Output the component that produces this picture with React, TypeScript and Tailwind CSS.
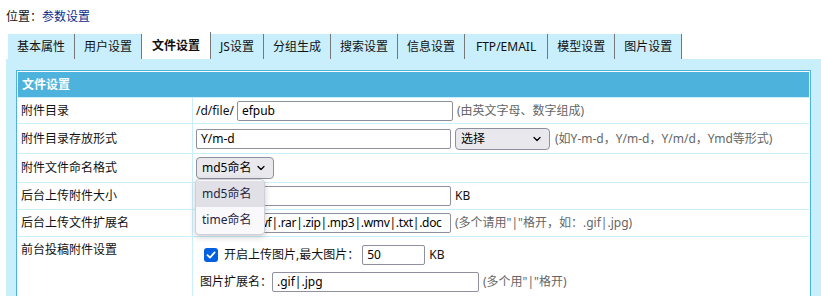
import React from 'react';
import { ChevronDown } from 'lucide-react';

const tabs = ['基本属性', '用户设置', '文件设置', 'JS设置', '分组生成', '搜索设置', '信息设置', 'FTP/EMAIL', '模型设置', '图片设置'];

const TextBox = ({ value, className }: { value: string; className: string }) => (
  <div className={`h-[20px] border border-[#8f8f9d] rounded-[2px] bg-white px-[4px] leading-[18px] text-black whitespace-nowrap overflow-hidden ${className}`}>
    {value}
  </div>
);

const FakeSelect = ({ label, className }: { label: string; className: string }) => (
  <div className={`h-[22px] border border-[#8f8f9d] rounded-[4px] bg-[#e9e9ed] pl-[5px] pr-[6px] flex items-center justify-between text-black ${className}`}>
    <span>{label}</span>
    <ChevronDown size={12} strokeWidth={2.5} />
  </div>
);

const Hint = ({ children }: { children: React.ReactNode }) => (
  <span className="text-[#666] whitespace-nowrap">{children}</span>
);

const Row = ({ label, height, top, children }: { label: string; height: string; top?: boolean; children: React.ReactNode }) => (
  <div className={`flex border-t border-[#c9effd] ${height}`}>
    <div className={`w-[175px] shrink-0 border-r border-[#c9effd] pl-[3px] flex ${top ? 'items-start pt-[4px]' : 'items-center'}`}>
      {label}
    </div>
    <div className={`flex-1 pl-[3px] relative ${top ? '' : 'flex items-center'}`}>{children}</div>
  </div>
);

export default function App() {
  return (
    <div className="w-[821px] h-[296px] overflow-hidden bg-white text-[12px] text-[#111] font-['Noto_Sans','Noto_Sans_CJK_SC',sans-serif] flex flex-col">
      {/* breadcrumb */}
      <div className="h-[32px] pl-[6px] pt-[8px] leading-[18px] shrink-0">
        位置：<span className="text-[#0b2c8a]">参数设置</span>
      </div>

      {/* tabs */}
      <div className="h-[27px] pl-[8px] flex items-end shrink-0">
        {tabs.map((t) =>
          t === '文件设置' ? (
            <div key={t} className="h-[27px] px-[10px] bg-white font-bold border-r border-[#777] flex items-center">
              {t}
            </div>
          ) : (
            <div
              key={t}
              className={`h-[25px] bg-[#c9effd] border-r border-[#777] flex items-center whitespace-nowrap ${t === 'FTP/EMAIL' ? 'px-[11px]' : 'px-[9px]'}`}
            >
              {t}
            </div>
          )
        )}
      </div>

      {/* panel */}
      <div className="flex-1 ml-[6px] bg-[#c9effd] pt-[11px] px-[10px]">
        <div className="border border-[#4eb3dc] bg-white p-[1px]">
          <div className="h-[25px] bg-[#4eb3dc] text-white font-bold pl-[4px] flex items-center">文件设置</div>

          <Row label="附件目录" height="h-[26px]">
            <span className="mr-[3px]">/d/file/</span>
            <TextBox value="efpub" className="w-[216px]" />
            <span className="ml-[4px]"><Hint>(由英文字母、数字组成)</Hint></span>
          </Row>

          <Row label="附件目录存放形式" height="h-[30px]">
            <TextBox value="Y/m-d" className="w-[255px]" />
            <FakeSelect label="选择" className="w-[95px] ml-[4px]" />
            <span className="ml-[5px]"><Hint>(如Y-m-d，Y/m-d，Y/m/d，Ymd等形式)</Hint></span>
          </Row>

          <Row label="附件文件命名格式" height="h-[29px]">
            <FakeSelect label="md5命名" className="w-[78px]" />
            {/* open dropdown */}
            <div className="absolute left-[2px] top-[25px] z-10 w-[70px] rounded-[4px] border border-[#cfcfd8] bg-[#f9f9fb] shadow-[0_2px_6px_rgba(0,0,0,0.2)] py-[1px] text-[#1f2547]">
              <div className="h-[26px] bg-[#e0e0e6] pl-[6px] flex items-center">md5命名</div>
              <div className="h-[26px] pl-[6px] flex items-center">time命名</div>
            </div>
          </Row>

          <Row label="后台上传附件大小" height="h-[27px]">
            <TextBox value="" className="w-[255px]" />
            <span className="ml-[4px]">KB</span>
          </Row>

          <Row label="后台上传文件扩展名" height="h-[27px]">
            <TextBox value=".gif|.jpg|.swf|.rar|.zip|.mp3|.wmv|.txt|.doc" className="w-[255px] tracking-[-0.3px]" />
            <span className="ml-[4px]"><Hint>(多个请用"|"格开，如：.gif|.jpg)</Hint></span>
          </Row>

          <Row label="前台投稿附件设置" height="h-[70px]" top>
            <div className="flex items-center pl-[8px] pt-[8px]">
              <div className="w-[14px] h-[14px] rounded-[3px] bg-[#0060df] flex items-center justify-center">
                <svg width="10" height="10" viewBox="0 0 10 10" fill="none">
                  <path d="M1.5 5.2 L4 7.6 L8.6 2.4" stroke="white" strokeWidth="1.8" strokeLinecap="round" strokeLinejoin="round" />
                </svg>
              </div>
              <span className="ml-[6px]">开启上传图片,最大图片：</span>
              <TextBox value="50" className="w-[63px] ml-[3px]" />
              <span className="ml-[4px]">KB</span>
            </div>
            <div className="flex items-center pl-[4px] pt-[7px]">
              <span>图片扩展名：</span>
              <TextBox value=".gif|.jpg" className="w-[207px]" />
              <span className="ml-[4px]"><Hint>(多个用"|"格开)</Hint></span>
            </div>
          </Row>
        </div>
      </div>
    </div>
  );
}
